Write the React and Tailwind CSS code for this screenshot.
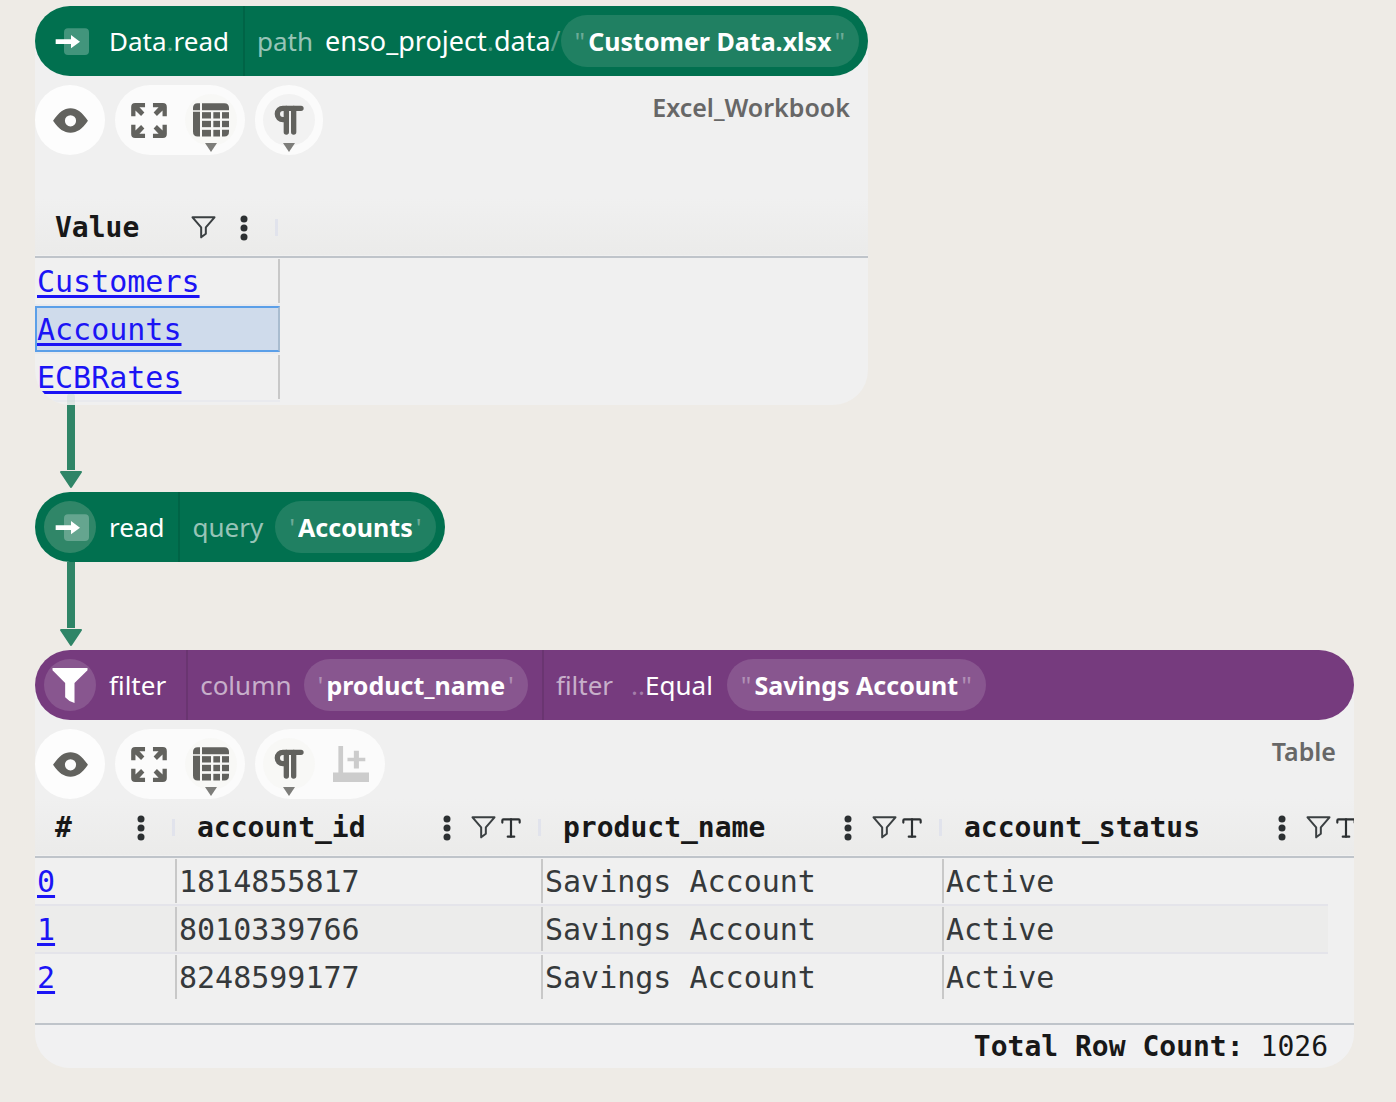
import React from "react";
import { Type } from "lucide-react";

const InputArrowIcon = () => (
  <svg viewBox="96 84 111 81" className="h-[27px] w-[37px]" aria-hidden="true">
    <rect x="132" y="85" width="75" height="80" rx="12" fill="#fff" fillOpacity="0.26" />
    <path d="M107 118H153V105L180 125L153 145V132H107Z" fill="#fff" />
  </svg>
);

const FunnelSolidIcon = () => (
  <svg viewBox="100 84 107 105" className="h-[35px] w-9" aria-hidden="true">
    <path d="M101 84H206V91L167 129V189L152 183L139 172V129L101 91Z" fill="#fff" />
  </svg>
);

const EyeIcon = () => (
  <svg viewBox="100 321 106 76" className="h-[25px] w-[35px]" aria-hidden="true">
    <path
      fillRule="evenodd"
      fill="#62625e"
      d="M100 360C118 334 133 322 153 322S188 334 206 360C188 386 173 396 153 396S118 386 100 360ZM153 343a17 17 0 1 0 0 34a17 17 0 1 0 0 -34Z"
    />
  </svg>
);

const corner = "M0 40V12Q0 0 12 0H42V13H25L40 29L30 39L13 23V40Z";
const FullscreenIcon = () => (
  <svg viewBox="0 0 108 106" className="h-[35px] w-9" fill="#62625e" aria-hidden="true">
    <path d={corner} />
    <path d={corner} transform="translate(108 0) scale(-1 1)" />
    <path d={corner} transform="translate(0 106) scale(1 -1)" />
    <path d={corner} transform="translate(108 106) scale(-1 -1)" />
  </svg>
);

const TableIcon = () => (
  <svg viewBox="519 309 108 101" className="h-[34px] w-9" fill="#62625e" aria-hidden="true">
    <path d="M519 330V323Q519 309 533 309H540V330Z" />
    <path d="M546 309H613Q627 309 627 323V330H546Z" />
    <path d="M519 335H540V409H533Q519 409 519 395Z" />
    {[336, 362].map((y) => (
      <g key={y}>
        <rect x="546" y={y} width="27" height="19" />
        <rect x="580" y={y} width="20" height="19" />
        <rect x="606" y={y} width="21" height="19" />
      </g>
    ))}
    <rect x="546" y="389" width="27" height="20" />
    <rect x="580" y="389" width="20" height="20" />
    <path d="M606 389H627V395Q627 409 613 409H606Z" />
  </svg>
);

const FormatIcon = () => (
  <svg
    viewBox="764 314 90 90"
    className="h-[30px] w-[30px]"
    fill="none"
    stroke="#62625e"
    strokeWidth="16"
    strokeLinecap="round"
    aria-hidden="true"
  >
    <path d="M845 324H791a17 17 0 0 0 0 34H801" />
    <path d="M801 324V395M823 324V395" />
  </svg>
);

const AddPlotIcon = () => (
  <svg viewBox="940 318 107 107" className="h-9 w-9" fill="#ccc" aria-hidden="true">
    <path d="M956 318H970V397H1047V425H940V397H956Z" />
    <path d="M1002 332H1017V353H1036V363H1017V385H1002V363H983V353H1002Z" />
  </svg>
);

const FunnelIcon = () => (
  <svg viewBox="513 79 74 69" className="h-[23px] w-[25px]" aria-hidden="true">
    <path
      d="M517 83H583L557 113V132L543 143V113Z"
      fill="none"
      stroke="#3b4042"
      strokeWidth="6"
      strokeLinejoin="round"
    />
  </svg>
);

const DotsIcon = () => (
  <svg viewBox="0 0 8 26" className="h-[26px] w-2" fill="#2c3032" aria-hidden="true">
    <circle cx="4" cy="4" r="3.5" />
    <circle cx="4" cy="13" r="3.5" />
    <circle cx="4" cy="22" r="3.5" />
  </svg>
);

const IconButton = ({ label, menu, shade = "", disabled, children }) => (
  <button
    type="button"
    aria-label={label}
    disabled={disabled}
    className={`relative flex size-[52px] items-center justify-center rounded-full ${shade}`}
  >
    {children}
    {menu && (
      <svg viewBox="0 0 12 9" className="absolute -bottom-1.5 left-5 h-[9px] w-3" aria-hidden="true">
        <path d="M0 0H12L6 9Z" fill="#7d7d7a" />
      </svg>
    )}
  </button>
);

const Group = ({ children }) => (
  <div className="flex h-[70px] items-center gap-2.5 rounded-full bg-[#fbfbfb] px-2">{children}</div>
);

const Toolbar = ({ type, shade, plot }) => (
  <div className="flex items-start gap-2.5">
    <div className="flex h-[70px] w-[70px] items-center justify-center rounded-full bg-[#fdfdfd]">
      <IconButton label="Toggle visualization">
        <EyeIcon />
      </IconButton>
    </div>
    <Group>
      <IconButton label="Fullscreen">
        <FullscreenIcon />
      </IconButton>
      <IconButton label="Choose visualization" menu shade="bg-[#f8f8f6]">
        <TableIcon />
      </IconButton>
    </Group>
    <Group>
      <IconButton label="Text format" menu shade={shade}>
        <FormatIcon />
      </IconButton>
      {plot && (
        <IconButton label="Create chart node" disabled>
          <AddPlotIcon />
        </IconButton>
      )}
    </Group>
    <span className="ml-auto pt-1.5 pr-[18px] text-[25px] leading-8 font-semibold text-[#676767]">{type}</span>
  </div>
);

const Node = ({ color, icon, disc, label, children, className = "" }) => (
  <div
    className={`relative z-10 flex h-[70px] items-center rounded-full text-[26px] leading-9 whitespace-nowrap text-white ${color} ${className}`}
  >
    <button
      type="button"
      aria-label={label}
      className={`mx-[9px] flex size-[52px] shrink-0 items-center justify-center rounded-full ${disc}`}
    >
      {icon}
    </button>
    {children}
  </div>
);

const Name = ({ children, className = "pr-3.5" }) => <span className={`pl-1 ${className}`}>{children}</span>;

const Argument = ({ name, children, className = "" }) => (
  <div className={`flex h-full items-center gap-3 border-l-2 border-black/10 pl-3 ${className}`}>
    <span className="text-white/60">{name}</span>
    <div className="flex flex-1 items-center">{children}</div>
  </div>
);

const TextValue = ({ label, value, quote, tint }) => (
  <span className={`flex h-[52px] items-center rounded-full px-3.5 ${tint}`}>
    <span className="text-white/35">{quote}</span>
    <input
      type="text"
      aria-label={label}
      defaultValue={value}
      className="[field-sizing:content] bg-transparent px-[3px] text-[25px] font-bold text-white outline-none"
    />
    <span className="text-white/35">{quote}</span>
  </span>
);

const Panel = ({ children, className = "" }) => (
  <section className={`relative -mt-[35px] overflow-hidden rounded-b-[35px] bg-[#f0f0f0] pt-11 ${className}`}>
    {children}
  </section>
);

const Separator = () => <span className="h-[17px] w-[3px] bg-[#e1e3ec]" />;

const DotsButton = () => (
  <button type="button" aria-label="Column menu">
    <DotsIcon />
  </button>
);

const FunnelButton = () => (
  <button type="button" aria-label="Filter column">
    <FunnelIcon />
  </button>
);

const headRow =
  "h-[58px] border-b-2 border-[#bfc4ca] bg-linear-to-b from-[#f0f0f0] to-[#ebebea] text-[28px] text-[#181818]";
const table = "w-full table-fixed border-collapse font-['DejaVu_Sans_Mono',monospace]";
const link = "text-[#1b14f5] underline decoration-3 underline-offset-3";

const HeaderCell = ({ name, clipped, children, colSpan }) => (
  <th scope="col" colSpan={colSpan} className="overflow-hidden p-0 text-left font-bold">
    <div className={clipped ? "flex items-center pl-5" : "flex items-center pr-0.5 pl-5"}>
      <span>{name}</span>
      <div className="ml-auto flex items-center">{children}</div>
    </div>
  </th>
);

const sheets = ["Customers", "Accounts", "ECBRates"];

const accounts = [
  ["1814855817", "Savings Account", "Active"],
  ["8010339766", "Savings Account", "Active"],
  ["8248599177", "Savings Account", "Active"],
];

const Connector = ({ className }) => (
  <div className={`ml-6 flex w-6 flex-col items-center ${className}`}>
    <div className="w-2 flex-1 bg-[#2f8567]" />
    <svg viewBox="0 0 24 19" className="h-[19px] w-6" aria-hidden="true">
      <path
        d="M2 2H22L12 17Z"
        fill="#2f8567"
        stroke="#2f8567"
        strokeWidth="2"
        strokeLinejoin="round"
      />
    </svg>
  </div>
);

const SheetTable = () => (
  <table className={`mt-11 ${table}`}>
    <colgroup>
      <col className="w-[245px]" />
      <col />
    </colgroup>
    <thead>
      <tr className={headRow}>
        <HeaderCell name="Value">
          <FunnelButton />
          <span className="w-6" />
          <DotsButton />
          <span className="w-[27px]" />
          <Separator />
        </HeaderCell>
        <td />
      </tr>
    </thead>
    <tbody className="text-[30px]">
      {sheets.map((s) => (
        <tr key={s} className="h-12">
          <td className="border-b-2 border-[#e9eaee] p-0">
            <div
              className={
                s === "Accounts"
                  ? "flex h-[46px] items-center border-2 border-r-[#a9bccf] border-[#5b9fe8] bg-[#cfdbeb]"
                  : "flex h-11 items-center border-r-2 border-[#c8c8c8] pl-0.5"
              }
            >
              <a href="#" className={link}>
                {s}
              </a>
            </div>
          </td>
          <td />
        </tr>
      ))}
    </tbody>
  </table>
);

const TypedTools = ({ clipped }) => (
  <>
    <DotsButton />
    <span className="w-5" />
    <FunnelButton />
    <span className="w-0.5" />
    <span className={clipped ? "w-[21px] overflow-hidden" : "w-[26px]"}>
      <Type size={26} strokeWidth={2} color="#2c3032" />
    </span>
    {!clipped && (
      <>
        <span className="w-3.5" />
        <Separator />
      </>
    )}
  </>
);

const AccountTable = () => (
  <table className={table}>
    <colgroup>
      <col className="w-[142px]" />
      <col className="w-[366px]" />
      <col className="w-[401px]" />
      <col />
      <col className="w-[26px]" />
    </colgroup>
    <thead>
      <tr className={headRow}>
        <HeaderCell name="#">
          <DotsButton />
          <span className="w-[27px]" />
          <Separator />
        </HeaderCell>
        <HeaderCell name="account_id">
          <TypedTools />
        </HeaderCell>
        <HeaderCell name="product_name">
          <TypedTools />
        </HeaderCell>
        <HeaderCell name="account_status" colSpan={2} clipped>
          <TypedTools clipped />
        </HeaderCell>
      </tr>
    </thead>
    <tbody className="text-[30px] text-[#35393b]">
      {accounts.map((row, i) => {
        const cell =
          i === 1
            ? "border-b-2 border-[#e4e4ea] bg-[#ececeb] p-0"
            : i === 0
              ? "border-b-2 border-[#e4e4ea] p-0"
              : "border-b-2 border-transparent p-0";
        return (
          <tr key={row[0]} className="h-12">
            <td className={cell}>
              <div className="flex h-11 items-center border-r-2 border-[#c8c8c8] pl-0.5">
                <a href="#" className={link}>
                  {i}
                </a>
              </div>
            </td>
            <td className={cell}>
              <div className="flex h-11 items-center border-r-2 border-[#c8c8c8] pl-0.5">{row[0]}</div>
            </td>
            <td className={cell}>
              <div className="flex h-11 items-center border-r-2 border-[#c8c8c8] pl-0.5">{row[1]}</div>
            </td>
            <td className={cell}>
              <div className="flex h-11 items-center pl-0.5">{row[2]}</div>
            </td>
            <td />
          </tr>
        );
      })}
    </tbody>
  </table>
);

export default function App() {
  return (
    <main className="min-h-screen bg-[#eeebe6] pt-1.5 pr-[42px] pb-[34px] pl-[35px] font-['Noto_Sans',sans-serif]">
      <div className="max-w-[833px]">
        <Node color="bg-[#01704f]" label="Data.read component" disc="" icon={<InputArrowIcon />}>
          <Name>
            Data<span className="text-white/35">.</span>read
          </Name>
          <Argument name="path" className="flex-1 pr-[9px]">
            <span className="flex-1 text-[27px]">
              enso_project<span className="text-white/35">.</span>data<span className="text-white/35">/</span>
            </span>
            <TextValue label="path" value="Customer Data.xlsx" quote={'"'} tint="bg-[#208062]" />
          </Argument>
        </Node>
        <Panel className="pb-[3px]">
          <Toolbar type="Excel_Workbook" shade="bg-[#f2f2f2]" />
          <SheetTable />
          <div className="absolute bottom-0 left-8 h-3 w-2 rounded-t-sm bg-[#2f8567]/10" />
        </Panel>
      </div>

      <Connector className="h-[84px]" />

      <Node
        color="bg-[#01704f]"
        label="read component"
        disc="bg-[#308668]"
        icon={<InputArrowIcon />}
        className="mt-[3px] w-fit pr-[9px]"
      >
        <Name>read</Name>
        <Argument name="query">
          <TextValue label="query" value="Accounts" quote="'" tint="bg-[#208062]" />
        </Argument>
      </Node>

      <Connector className="h-[85px]" />

      <div className="mt-[3px]">
        <Node color="bg-[#763b7e]" label="filter component" disc="bg-[#88568f]" icon={<FunnelSolidIcon />}>
          <Name className="pr-5">filter</Name>
          <Argument name="column" className="pr-3.5">
            <TextValue label="column" value="product_name" quote="'" tint="bg-[#88568f]" />
          </Argument>
          <Argument name="filter">
            <span className="pr-3.5 pl-1.5">
              <span className="text-white/35">..</span>Equal
            </span>
            <TextValue label="filter" value="Savings Account" quote={'"'} tint="bg-[#88568f]" />
          </Argument>
        </Node>
        <Panel>
          <Toolbar type="Table" shade="bg-[#f8f8f6]" plot />
          <AccountTable />
          <footer className="mt-[21px] flex h-[45px] items-center justify-end gap-[17px] border-t-2 border-[#bfc4ca] bg-[#f1f1f2] pr-[26px] font-['DejaVu_Sans_Mono',monospace] text-[28px] text-[#181818]">
            <strong>Total Row Count:</strong>
            <span>1026</span>
          </footer>
        </Panel>
      </div>
    </main>
  );
}
